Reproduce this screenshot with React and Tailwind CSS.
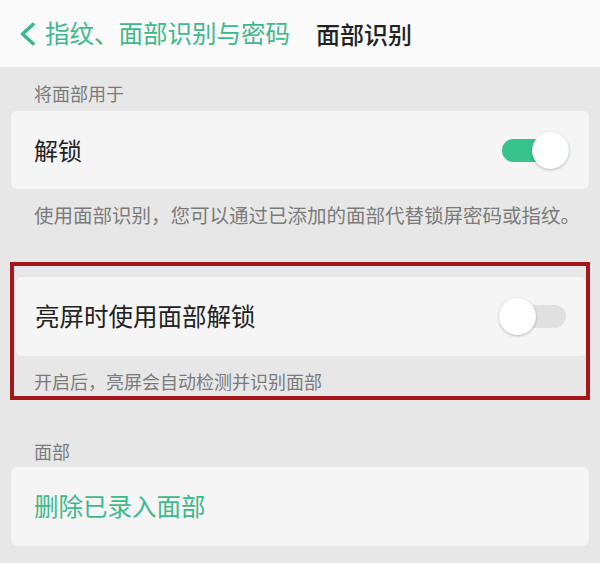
import React from "react";

const FONT = { fontFamily: "'Noto Sans CJK SC', 'Noto Sans', sans-serif" };

function Toggle({ on }) {
  return (
    <div className="relative w-[67px] h-[37px] flex items-center">
      <div className={`w-full h-[23px] rounded-full ${on ? "bg-[#38c28d]" : "bg-[#e0e0e0]"}`} />
      <div
        className={`absolute top-0 ${on ? "right-0" : "left-0"} w-[37px] h-[37px] rounded-full bg-white shadow-[0_1px_3px_rgba(0,0,0,0.25)]`}
      />
    </div>
  );
}

function SectionLabel({ children, className = "" }) {
  return (
    <div className={`pl-[34px] text-[18px] leading-[20px] text-[#7b7b7b] ${className}`}>{children}</div>
  );
}

export default function App() {
  return (
    <div className="w-[600px] h-[563px] bg-[#e7e7e7] overflow-hidden" style={FONT}>
      {/* header */}
      <div className="h-[67px] bg-[#fafafa] flex items-center pl-[19px]">
        <svg width="17" height="24" viewBox="0 0 17 24" className="mr-[9px]">
          <path d="M14 2.5 L3.5 12 L14 21.5" fill="none" stroke="#3cb98a" strokeWidth="3.6" strokeLinecap="round" strokeLinejoin="round" />
        </svg>
        <span className="text-[24.5px] leading-none text-[#3fb98b]">指纹、面部识别与密码</span>
        <span className="ml-[26px] text-[24px] leading-none text-[#222] font-medium">面部识别</span>
      </div>

      <SectionLabel className="pt-[16px] pb-[8px]">将面部用于</SectionLabel>

      <div className="mx-[11px] h-[78px] rounded-[6px] bg-[#f5f5f5] flex items-center justify-between pl-[23px] pr-[20px]">
        <span className="text-[24px] text-[#222]">解锁</span>
        <Toggle on />
      </div>

      <div className="pl-[34px] pt-[14px] text-[19.5px] leading-[24px] text-[#7b7b7b]">
        使用面部识别，您可以通过已添加的面部代替锁屏密码或指纹。
      </div>

      {/* highlighted block */}
      <div className="mt-[35px] mx-[10px] border-4 border-[#a3161b] pt-[11px]">
        <div className="ml-[2px] h-[79px] rounded-[6px] bg-[#f5f5f5] flex items-center justify-between pl-[19px] pr-[20px]">
          <span className="text-[24.5px] text-[#222]">亮屏时使用面部解锁</span>
          <Toggle on={false} />
        </div>
        <div className="pl-[20px] pt-[13px] pb-[3px] text-[18px] leading-[24px] text-[#7b7b7b]">
          开启后，亮屏会自动检测并识别面部
        </div>
      </div>

      <SectionLabel className="pt-[41px] pb-[6px]">面部</SectionLabel>

      <div className="mx-[11px] h-[79px] rounded-[6px] bg-[#f5f5f5] flex items-center pl-[23px]">
        <span className="text-[24.5px] text-[#3fb98b]">删除已录入面部</span>
      </div>
    </div>
  );
}
